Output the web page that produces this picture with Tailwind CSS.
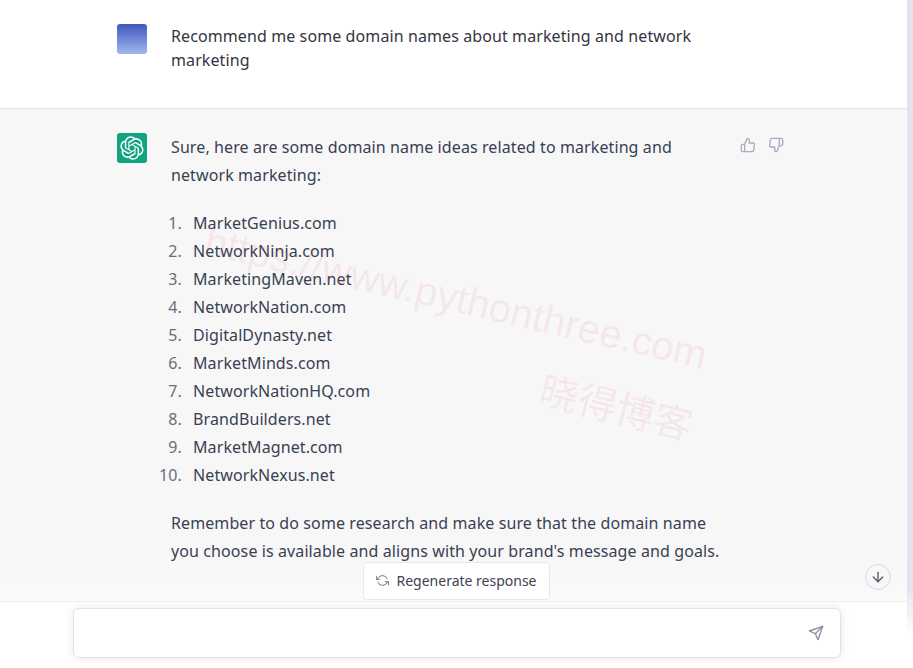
<!DOCTYPE html>
<html lang="en">
<head>
  <meta charset="UTF-8" />
  <title>Domain names chat</title>
  <script src="https://cdn.jsdelivr.net/npm/@tailwindcss/browser@4"></script>
</head>
<body class="bg-white text-[#374151] font-['Noto_Sans','Liberation_Sans',sans-serif] overflow-hidden">
  <div class="relative flex h-[668px] w-[913px] overflow-hidden">

    <!-- Watermark -->
    <div class="pointer-events-none absolute z-10 left-[206px] top-[220px] origin-left rotate-[13deg] whitespace-nowrap font-['Liberation_Sans',sans-serif] text-[40px] leading-none text-[#e8456f]/10">https://www.pythonthree.com</div>
    <div class="pointer-events-none absolute z-10 left-[539px] top-[386px] rotate-[14deg] whitespace-nowrap font-['Noto_Sans_CJK_SC',sans-serif] text-[39px] leading-none text-[#e8456f]/10">晓得博客</div>

    <!-- Chat column -->
    <main class="flex min-w-0 flex-1 flex-col">
      <div class="flex-1 min-h-0 overflow-hidden">
        <!-- User message -->
        <section class="h-[109px] border-b border-[#e3e3e6] bg-white pt-6 pl-[117px] flex gap-6">
          <div class="h-[30px] w-[30px] shrink-0 rounded-[3px] bg-gradient-to-b from-[#4357bf] to-[#a3b6ee]"></div>
          <p class="w-[556px] text-[16px] leading-6 tracking-[0.1px] text-[#343541]">Recommend me some domain names about marketing and network marketing</p>
        </section>

        <!-- Assistant message -->
        <section class="h-[492px] bg-[#f7f7f8] pt-6 pl-[117px] flex gap-6">
          <div class="flex h-[30px] w-[30px] shrink-0 items-center justify-center rounded-[3px] bg-[#10a37f]">
            <svg viewBox="0 0 41 41" class="h-[24px] w-[24px]" fill="#fff"><path d="M37.5324 16.8707C37.9808 15.5241 38.1363 14.0974 37.9886 12.6859C37.8409 11.2744 37.3934 9.91076 36.676 8.68622C35.6126 6.83404 33.9882 5.3676 32.0373 4.4985C30.0864 3.62941 27.9098 3.40259 25.8215 3.85078C24.8796 2.7893 23.7219 1.94125 22.4257 1.36341C21.1295 0.785575 19.7249 0.491269 18.3058 0.500197C16.1708 0.495044 14.0893 1.16803 12.3614 2.42214C10.6335 3.67624 9.34853 5.44666 8.6917 7.47815C7.30085 7.76286 5.98686 8.3414 4.8377 9.17505C3.68854 10.0087 2.73073 11.0782 2.02839 12.312C0.956464 14.1591 0.498905 16.2988 0.721698 18.4228C0.944492 20.5467 1.83612 22.5449 3.268 24.1293C2.81966 25.4759 2.66413 26.9026 2.81182 28.3141C2.95951 29.7256 3.40701 31.0892 4.12437 32.3138C5.18791 34.1659 6.8123 35.6322 8.76321 36.5013C10.7141 37.3704 12.8907 37.5973 14.9789 37.1492C15.9208 38.2107 17.0786 39.0587 18.3747 39.6366C19.6709 40.2144 21.0755 40.5087 22.4946 40.4998C24.6307 40.5054 26.7133 39.8321 28.4418 38.5772C30.1704 37.3223 31.4556 35.5506 32.1119 33.5179C33.5027 33.2332 34.8167 32.6547 35.9659 31.821C37.115 30.9874 38.0728 29.9178 38.7752 28.684C39.8458 26.8371 40.3023 24.6979 40.0789 22.5748C39.8556 20.4517 38.9639 18.4544 37.5324 16.8707ZM22.4978 37.8849C20.7443 37.8874 19.0459 37.2733 17.6994 36.1501C17.7601 36.117 17.8666 36.0586 17.936 36.0161L25.9004 31.4156C26.1003 31.3019 26.2663 31.137 26.3813 30.9378C26.4964 30.7386 26.5563 30.5124 26.5549 30.2825V19.0542L29.9213 20.998C29.9389 21.0068 29.9541 21.0198 29.9656 21.0359C29.977 21.052 29.9842 21.0707 29.9867 21.0902V30.3889C29.9842 32.375 29.1946 34.2791 27.7909 35.6841C26.3872 37.0892 24.4838 37.8806 22.4978 37.8849ZM6.39227 31.0064C5.51397 29.4888 5.19742 27.7107 5.49804 25.9832C5.55718 26.0187 5.66048 26.0818 5.73461 26.1244L13.699 30.7248C13.8975 30.8408 14.1233 30.902 14.3532 30.902C14.583 30.902 14.8088 30.8408 15.0073 30.7248L24.731 25.1103V28.9979C24.7321 29.0177 24.7283 29.0376 24.7199 29.0556C24.7115 29.0736 24.6988 29.0893 24.6829 29.1012L16.6317 33.7497C14.9096 34.7416 12.8643 35.0097 10.9447 34.4954C9.02506 33.9811 7.38785 32.7263 6.39227 31.0064ZM4.29707 13.6194C5.17156 12.0998 6.55279 10.9364 8.19885 10.3327C8.19885 10.4013 8.19491 10.5228 8.19491 10.6071V19.808C8.19351 20.0378 8.25334 20.2638 8.36823 20.4629C8.48312 20.6619 8.64893 20.8267 8.84863 20.9404L18.5723 26.5542L15.206 28.4979C15.1894 28.5089 15.1703 28.5155 15.1505 28.5173C15.1307 28.5191 15.1107 28.516 15.0924 28.5082L7.04046 23.8557C5.32135 22.8601 4.06716 21.2235 3.55289 19.3046C3.03862 17.3858 3.30624 15.3413 4.29707 13.6194ZM31.955 20.0556L22.2312 14.4411L25.5976 12.4981C25.6142 12.4872 25.6333 12.4805 25.6531 12.4787C25.6729 12.4769 25.6928 12.4801 25.7111 12.4879L33.7631 17.1364C34.9967 17.849 36.0017 18.8982 36.6606 20.1613C37.3194 21.4244 37.6047 22.849 37.4832 24.2684C37.3617 25.6878 36.8382 27.0432 35.9743 28.1759C35.1103 29.3086 33.9415 30.1717 32.6047 30.6641C32.6047 30.5947 32.6047 30.4733 32.6047 30.3889V21.188C32.6066 20.9586 32.5474 20.7328 32.4332 20.5338C32.319 20.3348 32.154 20.1698 31.955 20.0556ZM35.3055 15.0128C35.2464 14.9765 35.1431 14.9142 35.069 14.8717L27.1045 10.2712C26.906 10.1554 26.6803 10.0943 26.4504 10.0943C26.2206 10.0943 25.9948 10.1554 25.7963 10.2712L16.0726 15.8858V11.9982C16.0715 11.9783 16.0753 11.9585 16.0837 11.9405C16.0921 11.9225 16.1048 11.9068 16.1207 11.8949L24.1719 7.25025C25.4053 6.53903 26.8158 6.19376 28.2383 6.25482C29.6608 6.31589 31.0364 6.78077 32.2044 7.59508C33.3723 8.40939 34.2842 9.53945 34.8334 10.8531C35.3826 12.1667 35.5464 13.6095 35.3055 15.0128ZM14.2424 21.9419L10.8752 19.9981C10.8576 19.9893 10.8423 19.9763 10.8309 19.9602C10.8195 19.9441 10.8122 19.9254 10.8098 19.9058V10.6071C10.8107 9.18295 11.2173 7.78848 11.9819 6.58696C12.7466 5.38544 13.8377 4.42659 15.1275 3.82264C16.4173 3.21869 17.8524 2.99464 19.2649 3.1767C20.6775 3.35876 22.0089 3.93941 23.1034 4.85067C23.0427 4.88379 22.937 4.94215 22.8668 4.98473L14.9024 9.58517C14.7025 9.69878 14.5366 9.86356 14.4215 10.0626C14.3065 10.2616 14.2466 10.4877 14.2479 10.7175L14.2424 21.9419ZM16.071 17.9991L20.4018 15.4978L24.7325 17.9975V22.9985L20.4018 25.4983L16.071 22.9985V17.9991Z"/></svg>
          </div>

          <div class="w-[556px] shrink-0 text-[16px] leading-7 tracking-[0.1px]">
            <p class="mb-5">Sure, here are some domain name ideas related to marketing and network marketing:</p>
            <ol class="mb-5">
              <li class="flex gap-[11px]"><span class="flex w-[11px] justify-end whitespace-nowrap text-[#6b6c7b]">1.</span><span>MarketGenius.com</span></li>
              <li class="flex gap-[11px]"><span class="flex w-[11px] justify-end whitespace-nowrap text-[#6b6c7b]">2.</span><span>NetworkNinja.com</span></li>
              <li class="flex gap-[11px]"><span class="flex w-[11px] justify-end whitespace-nowrap text-[#6b6c7b]">3.</span><span>MarketingMaven.net</span></li>
              <li class="flex gap-[11px]"><span class="flex w-[11px] justify-end whitespace-nowrap text-[#6b6c7b]">4.</span><span>NetworkNation.com</span></li>
              <li class="flex gap-[11px]"><span class="flex w-[11px] justify-end whitespace-nowrap text-[#6b6c7b]">5.</span><span>DigitalDynasty.net</span></li>
              <li class="flex gap-[11px]"><span class="flex w-[11px] justify-end whitespace-nowrap text-[#6b6c7b]">6.</span><span>MarketMinds.com</span></li>
              <li class="flex gap-[11px]"><span class="flex w-[11px] justify-end whitespace-nowrap text-[#6b6c7b]">7.</span><span>NetworkNationHQ.com</span></li>
              <li class="flex gap-[11px]"><span class="flex w-[11px] justify-end whitespace-nowrap text-[#6b6c7b]">8.</span><span>BrandBuilders.net</span></li>
              <li class="flex gap-[11px]"><span class="flex w-[11px] justify-end whitespace-nowrap text-[#6b6c7b]">9.</span><span>MarketMagnet.com</span></li>
              <li class="flex gap-[11px]"><span class="flex w-[11px] justify-end whitespace-nowrap text-[#6b6c7b]">10.</span><span>NetworkNexus.net</span></li>
            </ol>
            <p>Remember to do some research and make sure that the domain name you choose is available and aligns with your brand's message and goals.</p>
          </div>

          <div class="-ml-[11px] flex gap-3 pt-1 text-[#acacbe]">
            <svg viewBox="0 0 24 24" class="h-4 w-4" fill="none" stroke="currentColor" stroke-width="2" stroke-linecap="round" stroke-linejoin="round"><path d="M14 9V5a3 3 0 0 0-3-3l-4 9v11h11.28a2 2 0 0 0 2-1.7l1.38-9a2 2 0 0 0-2-2.3zM7 22H4a2 2 0 0 1-2-2v-7a2 2 0 0 1 2-2h3"/></svg>
            <svg viewBox="0 0 24 24" class="h-4 w-4" fill="none" stroke="currentColor" stroke-width="2" stroke-linecap="round" stroke-linejoin="round"><path d="M10 15v4a3 3 0 0 0 3 3l4-9V2H5.72a2 2 0 0 0-2 1.7l-1.38 9a2 2 0 0 0 2 2.3zm7-13h2.67A2.31 2.31 0 0 1 22 4v7a2.31 2.31 0 0 1-2.33 2H17"/></svg>
          </div>
        </section>
      </div>

      <!-- Input -->
      <footer class="h-[67px] shrink-0 border-t border-[#eeeef0] bg-white pt-[6px] pl-[73px]">
        <div class="flex h-[50px] w-[768px] items-center justify-end rounded-md border border-[#e2e2e5] bg-white pr-4 shadow-[0_0_10px_rgba(0,0,0,0.1)]">
          <svg viewBox="0 0 24 24" class="h-4 w-4 text-[#8e8ea0]" fill="none" stroke="currentColor" stroke-width="2" stroke-linecap="round" stroke-linejoin="round"><line x1="22" y1="2" x2="11" y2="13"/><polygon points="22 2 15 22 11 13 2 9 22 2"/></svg>
        </div>
      </footer>
    </main>

    <!-- Scrollbar track -->
    <div class="h-full w-[6px] shrink-0 bg-gradient-to-b from-[#e3e3ec] from-[88%] to-white to-[95%]"></div>

    <!-- Fade above the input -->
    <div class="pointer-events-none absolute bottom-[67px] left-0 right-[6px] h-[42px] bg-gradient-to-b from-[#f7f7f8]/0 to-[#fafafa]"></div>

    <!-- Regenerate -->
    <button class="absolute z-20 left-[363px] top-[562px] flex h-[38px] w-[187px] items-center justify-center gap-[7px] rounded border border-[#e8e8ea] bg-white pb-[2px] text-[14px] text-[#40414f]">
      <svg viewBox="0 0 24 24" class="h-[13px] w-[13px] text-[#8e8ea0]" fill="none" stroke="currentColor" stroke-width="2" stroke-linecap="round" stroke-linejoin="round"><polyline points="1 4 1 10 7 10"/><polyline points="23 20 23 14 17 14"/><path d="M20.49 9A9 9 0 0 0 5.64 5.64L1 10m22 4l-4.64 4.36A9 9 0 0 1 3.51 15"/></svg>
      Regenerate response
    </button>

    <!-- Scroll to bottom -->
    <button class="absolute z-20 left-[865px] top-[564px] flex h-[26px] w-[26px] items-center justify-center rounded-full border border-[#d9d9e3] bg-[#f7f7f8] text-[#565869]">
      <svg viewBox="0 0 24 24" class="h-4 w-4" fill="none" stroke="currentColor" stroke-width="2" stroke-linecap="round" stroke-linejoin="round"><line x1="12" y1="5" x2="12" y2="19"/><polyline points="19 12 12 19 5 12"/></svg>
    </button>
  </div>
</body>
</html>
